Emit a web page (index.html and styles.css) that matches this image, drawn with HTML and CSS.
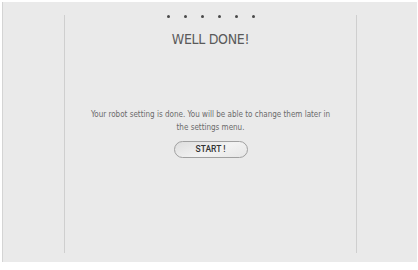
FILE: index.html
```html
<!DOCTYPE html>
<html>
<head>
<meta charset="utf-8">
<link rel="stylesheet" href="styles.css">
</head>
<body>
<div class="frame">
  <div class="column">
    <div class="dots">
      <span class="dot"></span><span class="dot"></span><span class="dot"></span><span class="dot"></span><span class="dot"></span><span class="dot"></span>
    </div>
    <h1 class="title">WELL DONE!</h1>
    <p class="message">Your robot setting is done. You will be able to change them later in the settings menu.</p>
    <button class="start">START !</button>
  </div>
</div>
</body>
</html>
```

FILE: styles.css
```css
html, body {
  margin: 0;
  padding: 0;
  background: #ffffff;
}
.frame {
  margin: 2px 0 0 2px;
  width: 415px;
  height: 260px;
  background: #eaeaea;
  border-left: 1px solid #d4d4d4;
  box-sizing: border-box;
  padding: 13px 0 0 61px;
}
.column {
  width: 293px;
  height: 238px;
  box-sizing: border-box;
  border-left: 1px solid #cfcfcf;
  border-right: 1px solid #cfcfcf;
  display: flex;
  flex-direction: column;
  align-items: center;
  font-family: "DejaVu Sans Condensed", "DejaVu Sans", sans-serif;
}
.dots {
  display: flex;
  gap: 14px;
  height: 3px;
}
.dot {
  width: 3px;
  height: 3px;
  border-radius: 50%;
  background: #4a4a4a;
}
.title {
  margin: 13px 0 0 0;
  font-size: 14px;
  line-height: 16px;
  font-weight: normal;
  color: #5a5a5a;
  letter-spacing: -0.3px;
}
.message {
  margin: 61px 0 0 0;
  width: 250px;
  text-align: center;
  font-size: 8px;
  line-height: 13px;
  color: #6a6a6a;
}
.start {
  margin-top: 7px;
  width: 74px;
  height: 17px;
  border: 1px solid #a0a0a0;
  border-radius: 9px;
  background: linear-gradient(160deg, #dedede 0%, #f2f2f2 55%, #e6e6e6 100%);
  font-family: Roboto, "DejaVu Sans Condensed", sans-serif;
  font-size: 8.5px;
  font-weight: 500;
  color: #333333;
  padding: 0;
  line-height: 15px;
}
```
